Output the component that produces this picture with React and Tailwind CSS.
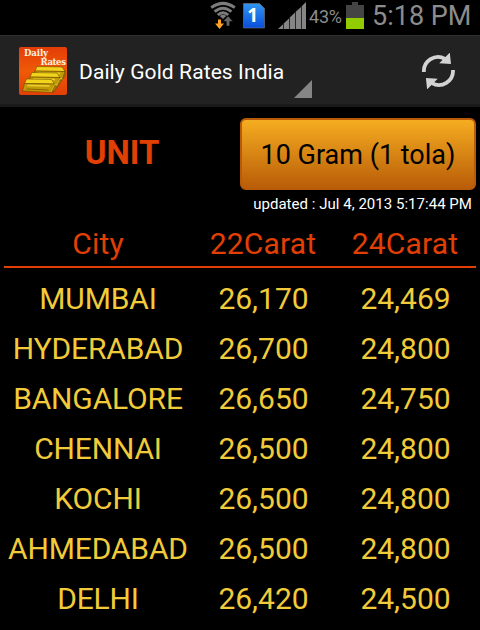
import React from "react";

const rates = [
  { city: "MUMBAI", carat22: "26,170", carat24: "24,469" },
  { city: "HYDERABAD", carat22: "26,700", carat24: "24,800" },
  { city: "BANGALORE", carat22: "26,650", carat24: "24,750" },
  { city: "CHENNAI", carat22: "26,500", carat24: "24,800" },
  { city: "KOCHI", carat22: "26,500", carat24: "24,800" },
  { city: "AHMEDABAD", carat22: "26,500", carat24: "24,800" },
  { city: "DELHI", carat22: "26,420", carat24: "24,500" },
];

const WifiIcon = () => (
  <svg className="h-[28px] w-[26px]" viewBox="0 0 26 28" fill="none">
    <g stroke="#7c7c7c" strokeWidth="3">
      <path d="M1.2 6.6Q13 -1.8 24.8 6.6" />
      <path d="M4.6 10.6Q13 3.8 21.4 10.6" />
      <path d="M7.8 14Q13 9.4 18.2 14" />
    </g>
    <path d="M9.8 15Q13 12.6 16.2 15L13 18Z" fill="#7c7c7c" />
    <path d="M8 18.5H11V22.6H14L9.5 28L5 22.6H8Z" fill="#ffa225" />
    <path d="M18 15L23 20.5H19.7V25H16.3V20.5H13Z" fill="#666" stroke="#000" strokeWidth=".5" />
  </svg>
);

const SimIcon = () => (
  <svg className="h-[26px] w-[22px]" viewBox="0 0 22 26">
    <defs>
      <linearGradient id="sim" x1="0" y1="0" x2="0" y2="1">
        <stop offset="0" stopColor="#3296f0" />
        <stop offset="1" stopColor="#084ddb" />
      </linearGradient>
    </defs>
    <path d="M.5 .5H16.5L21.5 5.5V25H.5Z" fill="url(#sim)" stroke="#777" strokeWidth=".6" />
    <text x="9.8" y="19" textAnchor="middle" fill="#fff" fontFamily="Open Sans, sans-serif" fontWeight="700" fontSize="19">
      1
    </text>
  </svg>
);

const SignalIcon = () => (
  <svg className="h-[28px] w-[29px]" viewBox="0 0 29 28" fill="#858585">
    <path d="M0 27L5 22.2V27ZM5.7 21.4L11 16.4V27H5.7ZM11.7 15.6L17 10.6V27H11.7ZM17.7 9.8L23 4.9V27H17.7ZM23.7 4.2L28 0V27H23.7Z" />
  </svg>
);

const BatteryIcon = () => (
  <svg className="h-[27px] w-[18px]" viewBox="0 0 18 27">
    <path d="M6 0H12V3H18V16H0V3H6Z" fill="#444" />
    <path d="M0 16H18V27H0Z" fill="#92cb00" />
  </svg>
);

const Ingot = ({ x, y }) => (
  <g transform={`translate(${x} ${y})`} stroke="#5e4300" strokeWidth=".5" strokeLinejoin="round">
    <path d="M3 0L28 .5L31 5L1 4.5Z" fill="#f2d41c" />
    <path d="M1 4.5L31 5L28 13.5L-1 12Z" fill="#c39a08" />
    <path d="M4 6.5L26 7" stroke="#ead02e" strokeWidth="1.6" />
    <path d="M3 10L25 11" stroke="#8a6800" strokeWidth="1" />
  </g>
);

const AppLogo = () => (
  <svg className="h-12 w-12" viewBox="0 0 48 48">
    <defs>
      <linearGradient id="logo" x1="0" y1="0" x2="0" y2="1">
        <stop offset="0" stopColor="#e43c08" />
        <stop offset=".5" stopColor="#ef5a08" />
        <stop offset="1" stopColor="#e04005" />
      </linearGradient>
    </defs>
    <rect width="48" height="48" rx="2" fill="url(#logo)" />
    <path d="M34 46L46 29V23L32 32Z" fill="#9d7a04" stroke="#5e4300" strokeWidth=".5" />
    <Ingot x={15} y={19.5} />
    <Ingot x={10} y={25.5} />
    <Ingot x={4.5} y={32} />
    <path d="M32 45L35.5 37.5L38.5 38M37.5 38.5L41 31.5L43.5 32" stroke="#dcba18" strokeWidth="1" fill="none" />
    <g fill="#fff2dc" fontFamily="DejaVu Serif, serif" fontWeight="700" fontSize="8.6">
      <text x="5" y="9" textLength="24">Daily</text>
      <text x="21.5" y="18.4" textLength="25.5">Rates</text>
    </g>
  </svg>
);

const RefreshIcon = () => (
  <svg className="h-[36px] w-[34px]" viewBox="0 0 34 36">
    <g fill="none" stroke="#d3d3d3" strokeWidth="3.8">
      <path d="M2.9 19A14.2 14.2 0 0 1 24 5.8" />
      <path d="M32 17A14.2 14.2 0 0 1 10.9 30.2" />
    </g>
    <path d="M28.8 -.4L30 11L18.2 10.2ZM6.1 36.4L4.9 25L16.7 25.8Z" fill="#d3d3d3" />
  </svg>
);

const StatusBar = () => (
  <div className="flex h-[35px] shrink-0 items-start pl-[210px] text-[#8c8c8c]">
    <div className="pt-px">
      <WifiIcon />
    </div>
    <div className="ml-[7px] pt-[3px]">
      <SimIcon />
    </div>
    <div className="ml-[13px] pt-[2px]">
      <SignalIcon />
    </div>
    <span className="ml-[2px] w-[37px] text-[18px] leading-[34px] tracking-[-0.2px]">43%</span>
    <div className="pt-[2px]">
      <BatteryIcon />
    </div>
    <span className="ml-[8px] text-[27px] leading-[33px] whitespace-nowrap">5:18 PM</span>
  </div>
);

const ActionBar = () => (
  <div className="flex h-[72px] shrink-0 border-t border-b-3 border-t-[#303030] border-b-[#191919] bg-[#222222]">
    <div className="pt-[11px] pl-[19px]">
      <AppLogo />
    </div>
    <h1 className="ml-[12px] w-[215px] text-[21px] leading-[72px] tracking-[0.1px] whitespace-nowrap text-white">
      Daily Gold Rates India
    </h1>
    <svg className="mt-[44px] h-[18px] w-[18px]" viewBox="0 0 18 18">
      <path d="M18 0V18H0Z" fill="#858585" />
    </svg>
    <button className="mt-[17px] ml-[109px] h-[36px]">
      <RefreshIcon />
    </button>
  </div>
);

const App = () => {
  return (
    <div className="flex h-[630px] w-[480px] flex-col overflow-hidden bg-black font-['Roboto',sans-serif]">
      <StatusBar />
      <ActionBar />

      <div className="flex px-1 pt-[11px]">
        <div className="w-[236px] text-center text-[33px] leading-[69px] font-bold text-[#e13f04]">UNIT</div>
        <button className="h-[72px] w-[236px] rounded-md border-2 border-[#b85a07] bg-linear-to-b from-[#f5ad20] to-[#b95d08] pt-[2px] text-[27px] text-black">
          10 Gram (1 tola)
        </button>
      </div>
      <div className="h-[30px] pr-[8px] text-right text-[15px] leading-[28px] tracking-[0.03px] text-white">
        updated : Jul 4, 2013 5:17:44 PM
      </div>

      <div className="px-1 text-center text-[30px]">
        <div className="mb-[6px] grid grid-cols-[188px_142px_142px] border-b-2 border-[#e13f04] pt-[2px] leading-[44px] tracking-[0.2px] text-[#e13f04]">
          <div>City</div>
          <div>22Carat</div>
          <div>24Carat</div>
        </div>
        {rates.map((rate) => (
          <div
            key={rate.city}
            className="grid grid-cols-[188px_142px_142px] leading-[50px] text-[#f1cb3a]"
          >
            <div className="tracking-[-0.15px]">{rate.city}</div>
            <div className="pl-px">{rate.carat22}</div>
            <div className="pl-px">{rate.carat24}</div>
          </div>
        ))}
      </div>
    </div>
  );
};

export default App;
